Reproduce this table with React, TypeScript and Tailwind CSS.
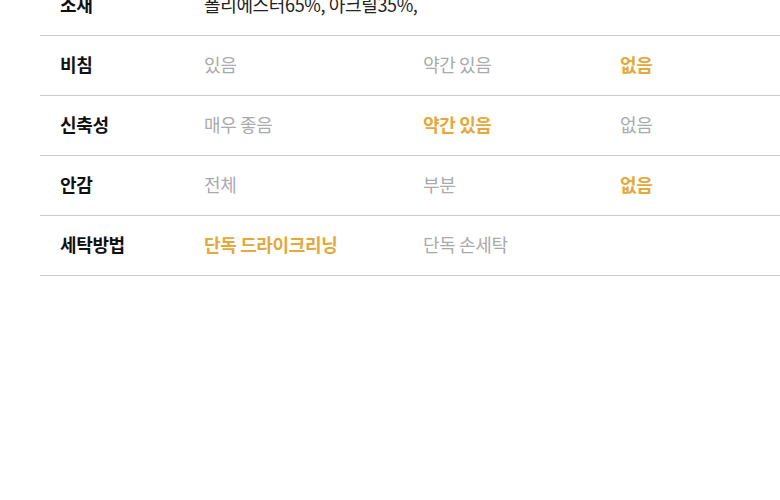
const rows: { label: string; cells: { text: string; on?: boolean }[] }[] = [
  { label: "비침", cells: [{ text: "있음" }, { text: "약간 있음" }, { text: "없음", on: true }] },
  { label: "신축성", cells: [{ text: "매우 좋음" }, { text: "약간 있음", on: true }, { text: "없음" }] },
  { label: "안감", cells: [{ text: "전체" }, { text: "부분" }, { text: "없음", on: true }] },
  { label: "세탁방법", cells: [{ text: "단독 드라이크리닝", on: true }, { text: "단독 손세탁" }, { text: "" }] },
];

export default function App() {
  return (
    <div
      className="min-h-[500px] bg-white pl-10 overflow-hidden"
      style={{ fontFamily: '"Noto Sans CJK KR", "Noto Sans", sans-serif' }}
    >
      <div className="-mt-[24px] text-[18px] tracking-[-0.02em]">
        {/* 소재 */}
        <div className="grid grid-cols-[164px_1fr] h-[60px] pb-[3px] items-center border-b border-[#cccccc]">
          <span className="pl-5 font-bold text-[#111111]">소재</span>
          <span className="text-[#222222]">폴리에스터65%, 아크릴35%,</span>
        </div>

        {rows.map((row) => (
          <div
            key={row.label}
            className="grid grid-cols-[164px_219px_197px_1fr] h-[60px] pb-[3px] items-center border-b border-[#cccccc]"
          >
            <span className="pl-5 font-bold text-[#111111]">{row.label}</span>
            {row.cells.map((c, i) => (
              <span key={i} className={c.on ? "font-bold text-[#e5a83a]" : "text-[#aaaaaa]"}>
                {c.text}
              </span>
            ))}
          </div>
        ))}
      </div>
    </div>
  );
}
